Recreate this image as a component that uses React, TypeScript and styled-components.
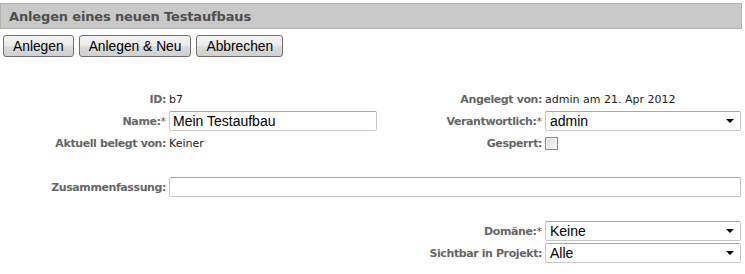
import React from 'react';
import styled, { createGlobalStyle } from 'styled-components';

const GlobalStyle = createGlobalStyle`
  html, body {
    margin: 0;
    padding: 0;
    background: #fff;
  }
  body {
    font-family: 'DejaVu Sans', Verdana, sans-serif;
  }
`;

const Page = styled.div`
  width: 745px;
  height: 274px;
  overflow: hidden;
  padding-top: 3px;
  box-sizing: border-box;
`;

const TitleBar = styled.div`
  width: 742px;
  height: 26px;
  box-sizing: border-box;
  border: 1px solid #b3b3b3;
  background: repeating-linear-gradient(
    to bottom,
    #cbcbcb 0px,
    #cbcbcb 1px,
    #c6c6c6 1px,
    #c6c6c6 2px
  );
  display: flex;
  align-items: center;
  padding-left: 8px;
`;

const Title = styled.h1`
  margin: 0;
  font-size: 13px;
  font-weight: bold;
  letter-spacing: -0.15px;
  color: #4f4f4f;
`;

const Toolbar = styled.div`
  display: flex;
  gap: 5px;
  padding: 6px 0 0 3px;
`;

const Button = styled.button`
  height: 22px;
  padding: 0 9px;
  border: 1px solid #707070;
  border-radius: 3px;
  background: linear-gradient(to bottom, #f4f4f4 0%, #ebebeb 50%, #dddddd 51%, #cfcfcf 100%);
  font-family: 'Liberation Sans', Arial, sans-serif;
  font-size: 13.8px;
  color: #000;
`;

const Form = styled.div`
  margin-top: 31px;
  display: flex;
  flex-direction: column;
  gap: 22px;
`;

const Section = styled.div`
  display: grid;
  grid-template-columns: 166px 208px 162px 196px;
  grid-auto-rows: 22px;
  column-gap: 3px;
  align-items: center;
`;

const Label = styled.div<{ $col?: number }>`
  grid-column: ${(p) => p.$col ?? 1};
  text-align: right;
  font-size: 11px;
  font-weight: bold;
  letter-spacing: -0.4px;
  color: #666;
  white-space: nowrap;
`;

const Star = styled.span`
  font-weight: normal;
  letter-spacing: 0;
  color: #555;
`;

const Value = styled.div<{ $col?: number }>`
  grid-column: ${(p) => p.$col ?? 2};
  font-size: 11px;
  color: #222;
  white-space: nowrap;
`;

const TextInput = styled.input<{ $span?: string }>`
  grid-column: ${(p) => p.$span ?? 'auto'};
  height: 20px;
  box-sizing: border-box;
  border: 1px solid #c8c8c8;
  border-top-color: #a8a8a8;
  border-radius: 2px;
  padding: 0 3px;
  font-family: 'Liberation Sans', Arial, sans-serif;
  font-size: 14px;
  color: #000;
  outline: none;
`;

const SelectBox = styled.div<{ $col?: number }>`
  grid-column: ${(p) => p.$col ?? 4};
  height: 20px;
  box-sizing: border-box;
  border: 1px solid #c8c8c8;
  border-top-color: #a8a8a8;
  border-radius: 2px;
  display: flex;
  align-items: center;
  justify-content: space-between;
  padding: 0 6px 0 4px;
  font-family: 'Liberation Sans', Arial, sans-serif;
  font-size: 14px;
  color: #000;
`;

const Caret = styled.span`
  width: 0;
  height: 0;
  border-left: 4px solid transparent;
  border-right: 4px solid transparent;
  border-top: 4px solid #000;
`;

const CheckBox = styled.span`
  grid-column: 4;
  width: 13px;
  height: 13px;
  box-sizing: border-box;
  border: 1px solid #8a8a8a;
  background: linear-gradient(135deg, #dcdcdc 0%, #f8f8f8 100%);
  box-shadow: inset 0 0 0 1px #f0f0f0;
`;

const Select = ({ value, col }: { value: string; col?: number }) => (
  <SelectBox $col={col}>
    <span>{value}</span>
    <Caret />
  </SelectBox>
);

export default function App() {
  return (
    <Page>
      <GlobalStyle />
      <TitleBar>
        <Title>Anlegen eines neuen Testaufbaus</Title>
      </TitleBar>
      <Toolbar>
        <Button>Anlegen</Button>
        <Button>Anlegen &amp; Neu</Button>
        <Button>Abbrechen</Button>
      </Toolbar>
      <Form>
        <Section>
          <Label>ID:</Label>
          <Value>b7</Value>
          <Label $col={3}>Angelegt von:</Label>
          <Value $col={4}>admin am 21. Apr 2012</Value>

          <Label>
            Name:<Star>*</Star>
          </Label>
          <TextInput defaultValue="Mein Testaufbau" />
          <Label $col={3}>
            Verantwortlich:<Star>*</Star>
          </Label>
          <Select value="admin" />

          <Label>Aktuell belegt von:</Label>
          <Value>Keiner</Value>
          <Label $col={3}>Gesperrt:</Label>
          <CheckBox />
        </Section>
        <Section>
          <Label>Zusammenfassung:</Label>
          <TextInput $span="2 / 5" defaultValue="" />
        </Section>
        <Section>
          <Label $col={3}>
            Domäne:<Star>*</Star>
          </Label>
          <Select value="Keine" />
          <Label $col={3}>Sichtbar in Projekt:</Label>
          <Select value="Alle" />
        </Section>
      </Form>
    </Page>
  );
}
